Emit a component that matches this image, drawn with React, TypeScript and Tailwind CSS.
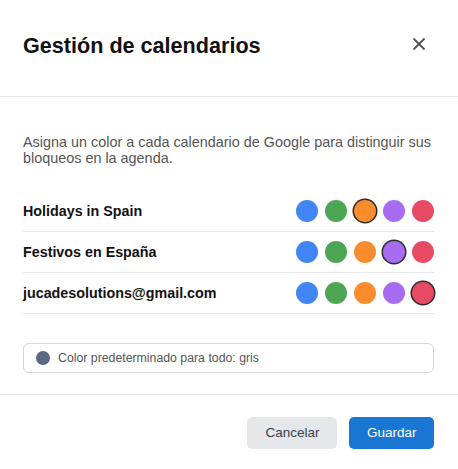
import { useState } from "react";

const COLORS = [
  { id: "blue", className: "bg-[#4285f4]" },
  { id: "green", className: "bg-[#4ba552]" },
  { id: "orange", className: "bg-[#fb8c2e]" },
  { id: "purple", className: "bg-[#a66cf2]" },
  { id: "red", className: "bg-[#e84a64]" },
];

const CALENDARS = [
  { name: "Holidays in Spain", color: "orange" },
  { name: "Festivos en España", color: "purple" },
  { name: "jucadesolutions@gmail.com", color: "red" },
];

function ColorPicker({
  value,
  onChange,
}: {
  value: string;
  onChange: (color: string) => void;
}) {
  return (
    <div className="flex items-center gap-[7px]">
      {COLORS.map((c) => (
        <button
          key={c.id}
          type="button"
          onClick={() => onChange(c.id)}
          className={`h-[22px] w-[22px] rounded-full ${c.className} ${
            value === c.id ? "shadow-[0_0_0_1.5px_#2b2b2b]" : ""
          }`}
        />
      ))}
    </div>
  );
}

export default function App() {
  const [selected, setSelected] = useState<Record<string, string>>(
    Object.fromEntries(CALENDARS.map((c) => [c.name, c.color])),
  );

  return (
    <div className="w-[458px] bg-white font-['Liberation_Sans',Arial,sans-serif] text-[#111]">
      <div className="flex items-start border-b border-[#e5e5e5] pl-[23px] pr-6 pt-8 pb-9">
        <h2 className="text-[21.6px] leading-7 font-bold">
          Gestión de calendarios
        </h2>
        <button
          type="button"
          className="ml-auto mt-[5px] mr-[8px] text-[#555]"
        >
          <svg
            width="14"
            height="14"
            viewBox="0 0 14 14"
            fill="none"
            stroke="currentColor"
            strokeWidth="2"
          >
            <path d="M1.5 1.5 12.5 12.5" />
            <path d="M12.5 1.5 1.5 12.5" />
          </svg>
        </button>
      </div>

      <div className="pl-[23px] pr-6 pt-[37px] pb-[21px]">
        <p className="text-[14.4px] leading-4 text-[#555]">
          Asigna un color a cada calendario de Google para distinguir sus
          bloqueos en la agenda.
        </p>

        <div className="mt-[25px]">
          {CALENDARS.map((cal) => (
            <div
              key={cal.name}
              className="flex h-[41px] items-center justify-between border-b border-[#e8e8e8]"
            >
              <span className="text-[14.3px] leading-5 font-bold">
                {cal.name}
              </span>
              <ColorPicker
                value={selected[cal.name]}
                onChange={(color) =>
                  setSelected((s) => ({ ...s, [cal.name]: color }))
                }
              />
            </div>
          ))}
        </div>

        <div className="mt-[29px] flex h-[30px] items-center gap-2 rounded-md border border-[#d4d7dc] px-3">
          <span className="h-[14px] w-[14px] rounded-full bg-[#5a6882]" />
          <span className="text-[12.3px] text-[#555]">
            Color predeterminado para todo: gris
          </span>
        </div>
      </div>

      <div className="flex justify-end gap-3 border-t border-[#e5e5e5] pl-[23px] pr-6 pt-[22px] pb-5">
        <button
          type="button"
          className="h-8 rounded-[5px] bg-[#e5e7eb] px-[18px] text-[13.5px] font-medium text-[#374151]"
        >
          Cancelar
        </button>
        <button
          type="button"
          className="h-8 rounded-[5px] bg-[#1976d2] px-[17.5px] text-[13.5px] font-medium text-white"
        >
          Guardar
        </button>
      </div>
    </div>
  );
}
